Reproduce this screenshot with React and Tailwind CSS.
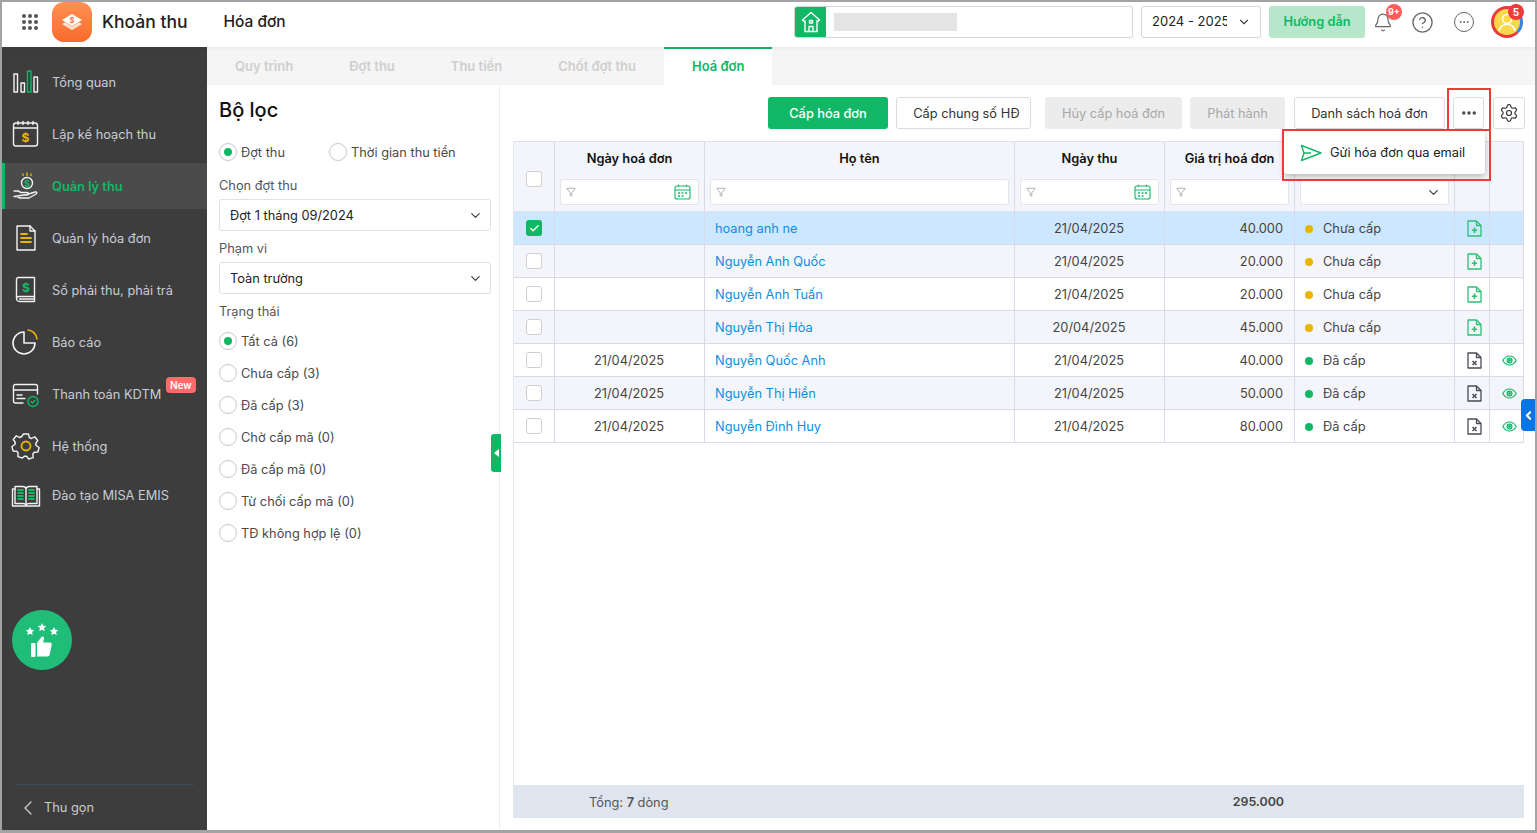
import { ChevronDown, ChevronLeft, Filter, Settings, HelpCircle, Bell, Ellipsis, Check } from 'lucide-react';

const navItems = [
  { label: 'Tổng quan', icon: 'chart' },
  { label: 'Lập kế hoạch thu', icon: 'plan' },
  { label: 'Quản lý thu', icon: 'hand', active: true },
  { label: 'Quản lý hóa đơn', icon: 'doc' },
  { label: 'Sổ phải thu, phải trả', icon: 'book' },
  { label: 'Báo cáo', icon: 'pie' },
  { label: 'Thanh toán KDTM', icon: 'card', badge: true },
  { label: 'Hệ thống', icon: 'gear' },
  { label: 'Đào tạo MISA EMIS', icon: 'open', tight: true },
];

const tabs = ['Quy trình', 'Đợt thu', 'Thu tiền', 'Chốt đợt thu'];

const statusFilters = ['Chưa cấp (3)', 'Đã cấp (3)', 'Chờ cấp mã (0)', 'Đã cấp mã (0)', 'Từ chối cấp mã (0)', 'TĐ không hợp lệ (0)'];

const rows = [
  { date: '', name: 'hoang anh ne', paid: '21/04/2025', value: '40.000', issued: false, selected: true },
  { date: '', name: 'Nguyễn Anh Quốc', paid: '21/04/2025', value: '20.000', issued: false },
  { date: '', name: 'Nguyễn Anh Tuấn', paid: '21/04/2025', value: '20.000', issued: false },
  { date: '', name: 'Nguyễn Thị Hòa', paid: '20/04/2025', value: '45.000', issued: false },
  { date: '21/04/2025', name: 'Nguyễn Quốc Anh', paid: '21/04/2025', value: '40.000', issued: true },
  { date: '21/04/2025', name: 'Nguyễn Thị Hiền', paid: '21/04/2025', value: '50.000', issued: true },
  { date: '21/04/2025', name: 'Nguyễn Đình Huy', paid: '21/04/2025', value: '80.000', issued: true },
];

const NavIcon = ({ name }) => {
  const w = '#f2f2f2';
  const y = '#e8b500';
  const g = '#10b865';
  return (
    <svg width="30" height="30" viewBox="0 0 30 30" fill="none" stroke={w} strokeWidth="1.4" strokeLinejoin="round" strokeLinecap="round">
      {name === 'chart' && (
        <>
          <rect x="3" y="7" width="3.5" height="18" />
          <rect x="10" y="16" width="3.5" height="9" />
          <rect x="16.5" y="4" width="3.5" height="21" stroke={g} />
          <rect x="23" y="10" width="3.5" height="15" />
        </>
      )}
      {name === 'plan' && (
        <>
          <rect x="2.5" y="4" width="24" height="23" rx="2.5" />
          <path d="M3 9h23M7 2.5v3M12 2.5v3M17 2.5v3M22 2.5v3" />
          <text x="14.5" y="23" textAnchor="middle" fontSize="12" fontWeight="700" fill={y} stroke="none">$</text>
        </>
      )}
      {name === 'hand' && (
        <>
          <circle cx="16" cy="12" r="5.5" />
          <text x="16" y="15.5" textAnchor="middle" fontSize="9" fontWeight="700" fill={g} stroke="none">$</text>
          <path d="M16 2v2.5M12 3v1.5M20 3v1.5" stroke={y} />
          <path d="M3 20h4l3 1.5h6c2 0 2 2.500 0 2.500h-4M16 23.500l8-2.500c2-.5 2.500 1 1 2l-7 4H9l-3-1.500H3z" />
        </>
      )}
      {name === 'doc' && (
        <>
          <path d="M6 3h13l5 5v19H6z" />
          <path d="M19 3v5h5" />
          <path d="M10 11h6M10 15h10M10 19h10" stroke={y} strokeWidth="1.800" />
        </>
      )}
      {name === 'book' && (
        <>
          <path d="M7 2.500h16.500v19H8a3 3 0 0 0-2.500 1.500V4.500a2 2 0 0 1 1.500-2z" />
          <path d="M5.500 23.500a3 3 0 0 0 3 3h15v-5M8.500 24h15" />
          <text x="15" y="16.500" textAnchor="middle" fontSize="12" fontWeight="700" fill={g} stroke="none">$</text>
        </>
      )}
      {name === 'pie' && (
        <>
          <path d="M13 5a11 11 0 1 0 11 11H13z" strokeWidth="1.600" />
          <path d="M17 3a10 10 0 0 1 9 9" stroke={y} strokeWidth="1.600" />
        </>
      )}
      {name === 'card' && (
        <>
          <path d="M12 24H4.500A2 2 0 0 1 2.500 22V7.500a2 2 0 0 1 2-2h20a2 2 0 0 1 2 2V15" />
          <path d="M2.500 11h24M6 16h5M6 19.500h8" />
          <circle cx="22" cy="22.500" r="5" stroke={g} />
          <path d="M20 22.500l1.500 1.500 2.500-2.500" stroke={g} />
        </>
      )}
      {name === 'gear' && (
        <>
          <path d="M12 3h5l.8 3.500 2.200 1 3.200-1.700 3 3.700-2 3 .4 2 3 2-1.200 4.500-3.600.2-1.500 1.800.4 3.600-4.500 1.400-2.200-2.800h-2.200L10.800 27l-4.500-1.400.4-3.600-1.500-1.800-3.600-.2L.4 15.500l3-2 .4-2-2-3 3-3.700L8 6.500l2.200-1z" transform="translate(.5 0)" />
          <circle cx="15" cy="15" r="4.500" stroke={y} strokeWidth="1.800" />
        </>
      )}
      {name === 'open' && (
        <>
          <path d="M4 6.500h8c1.500 0 2.500 1 3 2 .5-1 1.500-2 3-2h8v17h-8c-1.500 0-2.500.5-3 1.500-.5-1-1.500-1.500-3-1.500H4z" />
          <path d="M15 8.500V25M4 9H1.500v17H28.500V9H26" />
          <path d="M7 10h5M7 13h5M7 16h5M7 19h5M18 10h5M18 13h5M18 16h5M18 19h5" stroke={g} strokeWidth="1.800" />
        </>
      )}
    </svg>
  );
};

const Radio = ({ on, label }) => (
  <div className="flex items-center gap-[4px] text-[12.8px] leading-[18px] text-[#4a4a4a]">
    <span className="flex h-[18px] w-[18px] items-center justify-center rounded-full border border-[#c9c9c9] bg-white">
      {on && <span className="h-[8px] w-[8px] rounded-full bg-[#10b865]" />}
    </span>
    <span className="h-[18px] pt-[1px]">{label}</span>
  </div>
);

const Box = ({ on }) =>
  on ? (
    <span className="flex h-[16px] w-[16px] items-center justify-center rounded-[3px] bg-[#10b865]">
      <Check size={11} strokeWidth={3} className="text-white" />
    </span>
  ) : (
    <span className="h-[16px] w-[16px] rounded-[3px] border border-[#cfcfcf] bg-white" />
  );

const Calendar = () => (
  <svg width="17" height="16" viewBox="0 0 17 16" fill="none" stroke="#10b865" strokeWidth="1.100">
    <rect x="1" y="2" width="15" height="13" rx="2" />
    <path d="M1 6h15M4.500 .8v2M12.500 .8v2" />
    <path d="M4 9h2M7.500 9h2M11 9h2M4 12h2M7.500 12h2" strokeWidth="1.400" />
  </svg>
);

const FilterBox = ({ calendar }) => (
  <div className="flex h-[26px] w-full items-center justify-between rounded-[3px] border border-[#e2e4ea] bg-white pl-[5px] pr-[7px]">
    <Filter size={10} strokeWidth={1.400} className="text-[#777]" />
    {calendar && <Calendar />}
  </div>
);

const FileAdd = () => (
  <svg width="15" height="17" viewBox="0 0 15 17" fill="none" stroke="#2fbf75" strokeWidth="1.300" strokeLinejoin="round">
    <path d="M1 1h8.500L14 5.500V16H1z" />
    <path d="M9.500 1v4.500H14" />
    <path d="M7.500 7.500v5.500M4.800 10.300h5.400" strokeWidth="1.600" />
  </svg>
);

const FileX = () => (
  <svg width="15" height="17" viewBox="0 0 15 17" fill="none" stroke="#4b4b55" strokeWidth="1.300" strokeLinejoin="round">
    <path d="M1 1h8.500L14 5.500V16H1z" />
    <path d="M9.500 1v4.500H14" />
    <path d="M5.500 9l4 4M9.500 9l-4 4" strokeWidth="1.500" />
  </svg>
);

const Eye = () => (
  <svg width="15" height="11" viewBox="0 0 15 11" fill="none" stroke="#10b865" strokeWidth="1.200">
    <path d="M.8 5.500C2.500 2.500 4.800 1 7.500 1s5 1.500 6.700 4.500C12.500 8.500 10.200 10 7.500 10S2.500 8.500.8 5.500z" />
    <circle cx="7.500" cy="5.500" r="2.400" />
    <circle cx="7.500" cy="5.500" r=".8" fill="#10b865" />
  </svg>
);

const cols = 'grid grid-cols-[41px_150px_310px_150px_130px_160px_35px_34px]';
const cell = 'flex items-center border-r border-[#d9d9e8] min-w-0';
const label = 'h-[18px] pt-[1px] leading-[18px] text-[#555]';

export default function App() {
  return (
    <div className="flex h-[833px] w-[1537px] flex-col overflow-hidden border-x-2 border-t-2 border-b-[3px] border-[#a3a3a3] bg-white font-[Inter,sans-serif] text-[12.8px] text-[#333]">
      {/* Header */}
      <header className="z-10 flex h-[45px] shrink-0 items-center bg-white pb-[5px] shadow-[0_1px_4px_rgba(0,0,0,0.06)]">
        <div className="ml-[20px] grid w-[16px] grid-cols-3 gap-[2px]">
          {[...Array(9)].map((_, i) => (
            <span key={i} className="h-[4px] w-[4px] rounded-full bg-[#555]" />
          ))}
        </div>
        <div className="ml-[14px] flex h-[40px] w-[40px] items-center justify-center rounded-[12px] bg-gradient-to-b from-[#ff9052] to-[#f96a2c]">
          <svg width="24" height="20" viewBox="0 0 24 20">
            <path d="M2 12l10 6 10-6-3-1.800-7 4.200-7-4.200z" fill="#ffe3d0" />
            <path d="M12 2l10 6-10 6L2 8z" fill="#fff" />
            <text x="12" y="10.500" textAnchor="middle" fontSize="7" fontWeight="700" fill="#f96a2c">$</text>
          </svg>
        </div>
        <span className="ml-[10px] text-[17.5px] font-medium text-[#222]">Khoản thu</span>
        <span className="ml-[36px] text-[15.5px] font-medium text-[#222]">Hóa đơn</span>

        <div className="ml-auto flex h-[32px] w-[339px] overflow-hidden rounded-[3px] border border-[#d5d5d5]">
          <div className="flex w-[31px] items-center justify-center bg-[#10b865]">
            <svg width="20" height="22" viewBox="0 0 20 22" fill="none" stroke="#fff" strokeWidth="1.400" strokeLinejoin="round">
              <path d="M10 1.500L1.500 9l1.500 1.500 1-.8V20.500h12V9.700l1 .8L18.500 9z" />
              <path d="M8 20.500v-5h4v5M8.500 9.500h3v2.500h-3z" />
            </svg>
          </div>
          <div className="my-[6px] ml-[8px] w-[123px] bg-[#e4e4e4]" />
        </div>
        <div className="ml-[8px] flex h-[32px] w-[120px] items-center justify-between rounded-[3px] border border-[#d5d5d5] pl-[10px] pr-[9px] text-[13px] text-[#222]">
          <span className="w-[75px] overflow-hidden whitespace-nowrap">2024 - 2025</span>
          <ChevronDown size={14} className="text-[#444]" />
        </div>
        <div className="ml-[8px] flex h-[32px] w-[96px] items-center justify-center rounded-[3px] bg-[#b7e6cb] font-semibold text-[#10b865]">Hướng dẫn</div>
        <div className="relative ml-[8px] flex w-[20px] justify-center">
          <Bell size={23} strokeWidth={1.400} className="text-[#666]" />
          <span className="absolute -top-[7px] left-[13px] flex h-[16px] w-[16px] items-center justify-center rounded-full bg-[#ff5c5c] text-[9px] font-bold text-white">9+</span>
        </div>
        <HelpCircle size={23} strokeWidth={1.400} className="ml-[18px] text-[#666]" />
        <div className="ml-[20px] flex h-[20px] w-[20px] items-center justify-center rounded-full border-[1.500px] border-[#666]">
          <Ellipsis size={12} className="text-[#666]" />
        </div>
        <div className="relative ml-[17px] mr-[12px] h-[32px] w-[32px]">
          <div className="flex h-full w-full items-center justify-center rounded-full border-[3px] border-[#e93a3a] border-r-[#3b82e0] bg-[#f9d94a]">
            <svg width="22" height="22" viewBox="0 0 22 22" fill="none" stroke="#fff" strokeWidth="1.500">
              <circle cx="11" cy="8" r="4.500" />
              <path d="M3 20c1-5 4-6.500 8-6.500s7 1.500 8 6.500" />
            </svg>
          </div>
          <span className="absolute -right-[1px] -top-[2px] flex h-[16px] w-[16px] items-center justify-center rounded-full bg-[#ee3a3a] text-[10px] font-bold text-white">5</span>
        </div>
      </header>

      <div className="flex min-h-0 flex-1">
        {/* Sidebar */}
        <aside className="flex w-[205px] shrink-0 flex-col bg-[#3d3d3d] pt-[12px]">
          <nav className="flex flex-col gap-[6px]">
            {navItems.map((item) => (
              <div
                key={item.label}
                className={`relative flex h-[46px] items-center gap-[11px] border-l-[3px] pl-[6px] ${item.active ? 'border-[#10b865] bg-[#4b4b4b] font-semibold text-[#10b865]' : 'border-transparent text-[#c9ccd3]'} ${item.tight ? '-mt-[3px]' : ''}`}
              >
                <NavIcon name={item.icon} />
                <span className="whitespace-nowrap pt-[1px]">{item.label}</span>
                {item.badge && (
                  <span className="absolute left-[161px] top-[6px] flex h-[16px] items-center rounded-[4px] bg-[#ff6a6a] px-[4px] text-[10px] font-semibold text-white">New</span>
                )}
              </div>
            ))}
          </nav>
          <div className="ml-[10px] mt-[92px] flex h-[60px] w-[60px] flex-col items-center justify-center rounded-full bg-[#1fbd78]">
            <svg width="38" height="36" viewBox="0 0 38 36" fill="#fff">
              <path d="M7 5l1.300 2.700 3 .4-2.200 2 .6 3L7 11.700l-2.700 1.400.6-3-2.200-2 3-.4zM19 1l1.300 2.700 3 .4-2.200 2 .6 3L19 7.700l-2.700 1.400.6-3-2.200-2 3-.4zM31 5l1.300 2.700 3 .4-2.200 2 .6 3L31 11.700l-2.700 1.400.6-3-2.200-2 3-.4z" />
              <rect x="8" y="21" width="4.500" height="14" rx="1" />
              <path d="M14 21l4-5.500c.5-1.500 3-1.500 3 .5 0 1.500-.5 3-1 4.500h7c1.500 0 2 1.200 1.700 2.300l-2 10c-.3 1.200-1 1.700-2 1.700H14z" />
            </svg>
          </div>
          <div className="mx-[13px] mt-auto flex h-[46px] items-center border-t border-[#3d4a66] pl-[1px] text-[#c9ccd3]">
            <ChevronLeft size={24} strokeWidth={1.300} />
            <span className="ml-[4px]">Thu gọn</span>
          </div>
        </aside>

        <main className="flex min-w-0 flex-1 flex-col">
          {/* Tabs */}
          <div className="flex h-[38px] shrink-0 items-stretch bg-[#f5f5f5] text-[13px]">
            {tabs.map((t) => (
              <div key={t} className="flex items-center px-[28px] pt-[1px] font-semibold text-[#cfcfcf]">{t}</div>
            ))}
            <div className="flex items-center border-t-2 border-[#10b865] bg-white px-[28px] font-semibold text-[#10b865]">Hoá đơn</div>
          </div>

          <div className="relative flex min-h-0 flex-1">
            {/* Filter panel */}
            <section className="relative w-[293px] shrink-0 border-r border-[#efefef] pl-[12px] pr-[8px]">
              <h2 className="mt-[11px] text-[20px] font-medium leading-[28px] text-[#111]">Bộ lọc</h2>
              <div className="mt-[19px] flex gap-[40px]">
                <div className="w-[70px]"><Radio on label="Đợt thu" /></div>
                <Radio label="Thời gian thu tiền" />
              </div>
              <div className={`mt-[15px] ${label}`}>Chọn đợt thu</div>
              <div className="mt-[5px] flex h-[32px] items-center justify-between rounded-[3px] border border-[#e0e0e0] pl-[10px] pr-[7px] pt-[1px] text-[#222]">
                Đợt 1 tháng 09/2024
                <ChevronDown size={15} className="text-[#444]" />
              </div>
              <div className={`mt-[8px] ${label}`}>Phạm vi</div>
              <div className="mt-[5px] flex h-[32px] items-center justify-between rounded-[3px] border border-[#e0e0e0] pl-[10px] pr-[7px] pt-[1px] text-[#222]">
                Toàn trường
                <ChevronDown size={15} className="text-[#444]" />
              </div>
              <div className={`mt-[8px] ${label}`}>Trạng thái</div>
              <div className="mt-[12px] flex flex-col gap-[14px]">
                <Radio on label="Tất cả (6)" />
                {statusFilters.map((s) => (
                  <Radio key={s} label={s} />
                ))}
              </div>
              <div className="absolute -right-[2px] top-[349px] flex h-[38px] w-[10px] items-center justify-center rounded-l-[3px] bg-[#10b865]">
                <span className="h-0 w-0 border-y-[4px] border-r-[5px] border-y-transparent border-r-white" />
              </div>
            </section>

            {/* Table area */}
            <section className="flex min-w-0 flex-1 flex-col pb-[12px] pl-[13px] pr-[11px]">
              <div className="-mr-[1px] flex h-[56px] shrink-0 items-start justify-end pt-[12px]">
                <div className="flex h-[32px] w-[120px] items-center justify-center rounded-[3px] bg-[#10b865] pt-[1px] font-medium text-white">Cấp hóa đơn</div>
                <div className="ml-[8px] flex h-[32px] w-[135px] items-center justify-center rounded-[3px] border border-[#dcdcdc] pl-[6px] pt-[1px] text-[#333]">Cấp chung số HĐ</div>
                <div className="ml-[14px] flex h-[32px] w-[137px] items-center justify-center rounded-[3px] bg-[#ececec] pt-[1px] text-[#a8a8a8]">Hủy cấp hoá đơn</div>
                <div className="ml-[8px] flex h-[32px] w-[95px] items-center justify-center rounded-[3px] bg-[#ececec] pt-[1px] text-[#a8a8a8]">Phát hành</div>
                <div className="ml-[9px] flex h-[32px] w-[151px] items-center justify-center rounded-[3px] border border-[#dcdcdc] pt-[1px] text-[#333]">Danh sách hoá đơn</div>
                <div className="ml-[8px] flex h-[32px] w-[31px] items-center justify-center rounded-[3px] border border-[#dcdcdc]">
                  <Ellipsis size={18} strokeWidth={2.500} className="text-[#444]" />
                </div>
                <div className="ml-[9px] flex h-[32px] w-[32px] items-center justify-center rounded-[3px] border border-[#dcdcdc]">
                  <Settings size={20} strokeWidth={1.400} className="text-[#333]" />
                </div>
              </div>

              <div className="flex min-h-0 flex-1 flex-col border-l border-[#e4e6ee]">
                {/* Column headers */}
                <div className={`${cols} h-[71px] shrink-0 border-y border-[#dfe1ea] bg-[#f3f5fa] font-semibold text-[#111]`}>
                  <div className={`${cell} justify-center pt-[4px]`}><Box /></div>
                  <div className={`${cell} flex-col px-[5px] pt-[8px]`}><span className="mb-[11px] leading-[18px]">Ngày hoá đơn</span><FilterBox calendar /></div>
                  <div className={`${cell} flex-col px-[5px] pt-[8px]`}><span className="mb-[11px] leading-[18px]">Họ tên</span><FilterBox /></div>
                  <div className={`${cell} flex-col px-[5px] pt-[8px]`}><span className="mb-[11px] leading-[18px]">Ngày thu</span><FilterBox calendar /></div>
                  <div className={`${cell} flex-col px-[5px] pt-[8px]`}><span className="mb-[11px] whitespace-nowrap leading-[18px]">Giá trị hoá đơn</span><FilterBox /></div>
                  <div className={`${cell} flex-col justify-end px-[5px] pb-[6px]`}>
                    <div className="flex h-[26px] w-full items-center justify-end rounded-[3px] border border-[#e2e4ea] bg-white pr-[7px]">
                      <ChevronDown size={15} className="text-[#444]" />
                    </div>
                  </div>
                  <div className={cell} />
                  <div className={cell} />
                </div>

                {/* Rows */}
                {rows.map((r, i) => (
                  <div
                    key={r.name}
                    className={`${cols} h-[33px] shrink-0 border-b border-[#d9d9e8] ${r.selected ? 'bg-[#cce7ff]' : i % 2 === 1 ? 'bg-[#f4f5fa]' : 'bg-white'}`}
                  >
                    <div className={`${cell} justify-center`}><Box on={r.selected} /></div>
                    <div className={`${cell} justify-center pr-[1px] pt-[1px] text-[#444]`}>{r.date}</div>
                    <div className={`${cell} pl-[10px] pt-[1px] text-[#0d8fe0]`}>{r.name}</div>
                    <div className={`${cell} justify-center pr-[1px] pt-[1px] text-[#444]`}>{r.paid}</div>
                    <div className={`${cell} justify-end pr-[11px] pt-[1px] text-[#444]`}>{r.value}</div>
                    <div className={`${cell} pl-[10px] pt-[1px] text-[#444]`}>
                      <span className={`mr-[10px] h-[8px] w-[8px] rounded-full ${r.issued ? 'bg-[#10b865]' : 'bg-[#e8b500]'}`} />
                      {r.issued ? 'Đã cấp' : 'Chưa cấp'}
                    </div>
                    <div className={`${cell} justify-center pl-[4px]`}>{r.issued ? <FileX /> : <FileAdd />}</div>
                    <div className={`${cell} justify-center pl-[5px]`}>{r.issued && <Eye />}</div>
                  </div>
                ))}

                {/* Footer */}
                <div className={`${cols} mt-auto h-[33px] shrink-0 items-center bg-[#dfe5ef] pt-[2px] text-[#555]`}>
                  <span className="col-span-4 pl-[75px]">Tổng: <b className="font-semibold">7</b> dòng</span>
                  <span className="pr-[11px] text-right text-[12.4px] font-semibold text-[#444]">295.000</span>
                </div>
              </div>
            </section>

            {/* Blue side toggle */}
            <div className="absolute right-0 top-[314px] flex h-[32px] w-[14px] items-center justify-center rounded-l-[4px] bg-[#0a74e6]">
              <ChevronLeft size={13} strokeWidth={4} className="text-white" />
            </div>

            {/* More menu */}
            <div className="absolute left-[1077px] top-[46px] flex h-[43px] w-[201px] items-center gap-[8px] rounded-[3px] bg-white pl-[16px] text-[#222] shadow-[0_2px_6px_rgba(0,0,0,0.28)]">
              <svg width="22" height="18" viewBox="0 0 22 18" fill="none" stroke="#10b865" strokeWidth="1.400" strokeLinejoin="round">
                <path d="M1.500 1.500L21 9 1.500 16.500 4 9zM4 9h7" />
              </svg>
              Gửi hóa đơn qua email
            </div>
            <div className="pointer-events-none absolute left-[1075px] top-[44px] h-[52px] w-[209px] border-2 border-[#f03a3a]" />
            <div className="pointer-events-none absolute left-[1240px] top-[3px] h-[43px] w-[44px] border-2 border-[#f03a3a]" />
          </div>
        </main>
      </div>
    </div>
  );
}
